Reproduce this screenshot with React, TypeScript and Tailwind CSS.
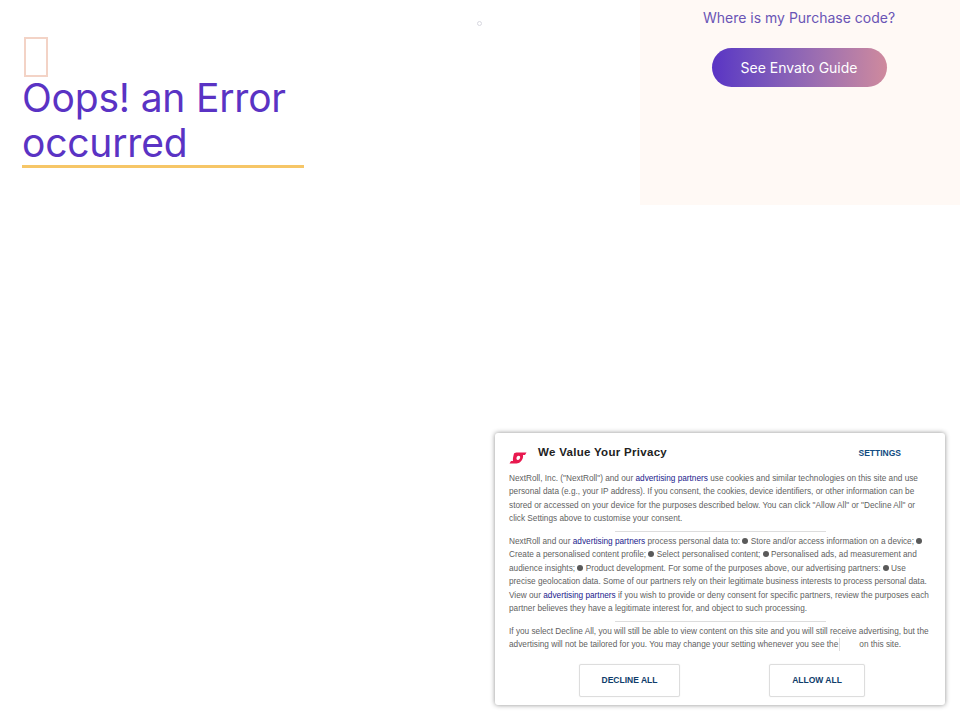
export default function App() {
  const L = ({ children }: { children: React.ReactNode }) => (
    <a className="text-[#1a1a8c]">{children}</a>
  );
  const B = () => <span className="mb-[1px] inline-block size-[6px] rounded-full bg-[#5a5a5a] align-middle" />;
  return (
    <div className="relative h-[720px] w-[960px] overflow-hidden bg-white" style={{ fontFamily: '"Liberation Sans", Arial, sans-serif' }}>
      <div className="flex items-start">
        <div className="w-[640px] shrink-0 pl-[22px] pt-[37px]">
          <div className="ml-[2px] h-[40px] w-[24px] border-[2px] border-[#f3d3c6]" />
          <h1 className="-mt-[2px] w-[282px] border-b-[3px] border-[#f6c667] font-['Inter',sans-serif] text-[39px] font-normal leading-[45px] tracking-[-0.2px] text-[#5a33c4]">
            Oops! an Error occurred
          </h1>
        </div>
        <div className="flex h-[205px] w-[320px] flex-col items-center bg-[#fff9f5] pr-[2px] pt-[8px]">
          <p className="font-['Inter',sans-serif] text-[14px] leading-[20px] text-[#6a55b5]">Where is my Purchase code?</p>
          <button className="mt-[20px] h-[39px] w-[175px] rounded-full bg-gradient-to-r from-[#5a33c4] to-[#cf8a9d] font-['Inter',sans-serif] text-[14px] text-white">
            See Envato Guide
          </button>
        </div>
      </div>

      <div className="absolute left-[477px] top-[21px] size-[5px] rounded-full border border-[#d8d8e0]" />

      <div className="absolute left-[495px] top-[433px] flex h-[272px] w-[450px] flex-col rounded-[3px] bg-white px-[14px] pt-[9px] shadow-[0_0_5px_rgba(0,0,0,0.45)]">
        <div className="flex h-[22px] items-center">
          <svg width="18" height="12" viewBox="0 0 18 12" className="mt-[9px] shrink-0">
            <path d="M5 1.5C6 0.8 7 0.5 8.5 0.5H17.5L16 3H14C14.5 5 13.5 8 11.5 9.8C10.5 10.8 9 11.5 7.5 11.5H0.5L2 9H4C3.5 7 4.5 3.5 5 1.5Z M7.6 5.5C7.2 6.8 7.6 8 8.9 8C10.1 8 10.9 7 11.1 5.8C11.4 4.6 10.8 3.7 9.7 3.7C8.6 3.7 7.9 4.5 7.6 5.5Z" fill="#e8194f" fillRule="evenodd" />
          </svg>
          <h2 className="ml-[11px] text-[11.5px] font-bold tracking-[0.3px] text-[#222]">We Value Your Privacy</h2>
          <button className="ml-auto mr-[30px] text-[8.5px] font-bold text-[#0f4c81]">SETTINGS</button>
        </div>
        <div className="whitespace-nowrap text-[8.25px] leading-[13.5px] text-[#5f5f5f]">
          <p className="mt-[7.5px]">
            NextRoll, Inc. ("NextRoll") and our <L>advertising partners</L> use cookies and similar technologies on this site and use<br />
            personal data (e.g., your IP address). If you consent, the cookies, device identifiers, or other information can be<br />
            stored or accessed on your device for the purposes described below. You can click "Allow All" or "Decline All" or<br />
            click Settings above to customise your consent.
          </p>
          <hr className="mx-auto mt-[5px] w-[211px] border-[#ddd]" />
          <p className="mt-[3px]">
            NextRoll and our <L>advertising partners</L> process personal data to: <B /> Store and/or access information on a device; <B /><br />
            Create a personalised content profile; <B /> Select personalised content; <B /> Personalised ads, ad measurement and<br />
            audience insights; <B /> Product development. For some of the purposes above, our advertising partners: <B /> Use<br />
            precise geolocation data. Some of our partners rely on their legitimate business interests to process personal data.<br />
            View our <L>advertising partners</L> if you wish to provide or deny consent for specific partners, review the purposes each<br />
            partner believes they have a legitimate interest for, and object to such processing.
          </p>
          <hr className="mx-auto mt-[5px] w-[211px] border-[#ddd]" />
          <p className="mt-[3px]">
            If you select Decline All, you will still be able to view content on this site and you will still receive advertising, but the<br />
            advertising will not be tailored for you. You may change your setting whenever you see the
            <span className="mx-[1px] inline-block h-[13px] w-[19px] border-l border-[#ddd] align-middle" />
            on this site.
          </p>
        </div>
        <div className="mt-[12px] flex text-[8.5px] font-bold text-[#0f3d6b]">
          <button className="ml-[70px] h-[33px] w-[101px] rounded-[2px] border border-[#ddd] shadow-[0_0_1px_rgba(0,0,0,0.15)]">DECLINE ALL</button>
          <button className="ml-[89px] h-[33px] w-[96px] rounded-[2px] border border-[#ddd] shadow-[0_0_1px_rgba(0,0,0,0.15)]">ALLOW ALL</button>
        </div>
      </div>
    </div>
  );
}
